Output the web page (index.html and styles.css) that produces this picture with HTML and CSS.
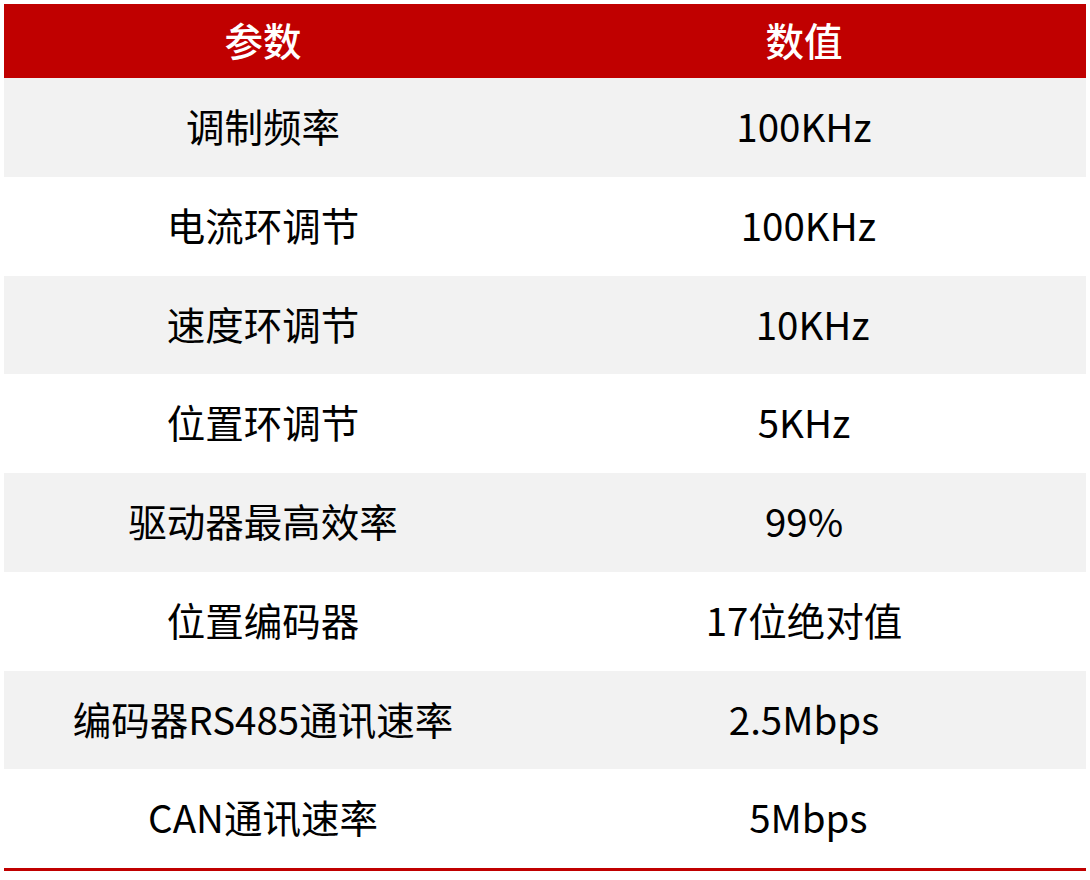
FILE: index.html
```html
<!DOCTYPE html>
<html lang="zh-CN">
<head>
<meta charset="utf-8">
<title>参数</title>
<link rel="stylesheet" href="styles.css">
</head>
<body>
<div class="wrap">
  <div class="table">
    <div class="cell head">参数</div><div class="cell head">数值</div>
    <div class="cell gray">调制频率</div><div class="cell gray">100KHz</div>
    <div class="cell">电流环调节</div><div class="cell">&nbsp;100KHz</div>
    <div class="cell gray">速度环调节</div><div class="cell gray">&nbsp;&nbsp;10KHz</div>
    <div class="cell">位置环调节</div><div class="cell">5KHz</div>
    <div class="cell gray">驱动器最高效率</div><div class="cell gray">99%</div>
    <div class="cell">位置编码器</div><div class="cell">17位绝对值</div>
    <div class="cell gray">编码器RS485通讯速率</div><div class="cell gray">2.5Mbps</div>
    <div class="cell">CAN通讯速率</div><div class="cell">&nbsp;5Mbps</div>
  </div>
</div>
</body>
</html>
```
FILE: styles.css
```css
html, body {
  margin: 0;
  padding: 0;
  background: #ffffff;
}
.wrap {
  padding: 4px 4px 0 4px;
}
.table {
  display: grid;
  grid-template-columns: 518px 564px;
  grid-template-rows: 74px repeat(8, 98.75px);
  border-bottom: 3px solid #c00000;
  font-family: "Noto Sans CJK SC", "Noto Sans", sans-serif;
  font-size: 38.5px;
  line-height: 1;
  color: #000000;
}
.cell {
  display: flex;
  align-items: center;
  justify-content: center;
  white-space: pre;
  background: #ffffff;
  padding-bottom: 4px;
}
.cell.gray {
  background: #f2f2f2;
}
.cell.head {
  background: #c00000;
  color: #ffffff;
  font-weight: 500;
}
```
